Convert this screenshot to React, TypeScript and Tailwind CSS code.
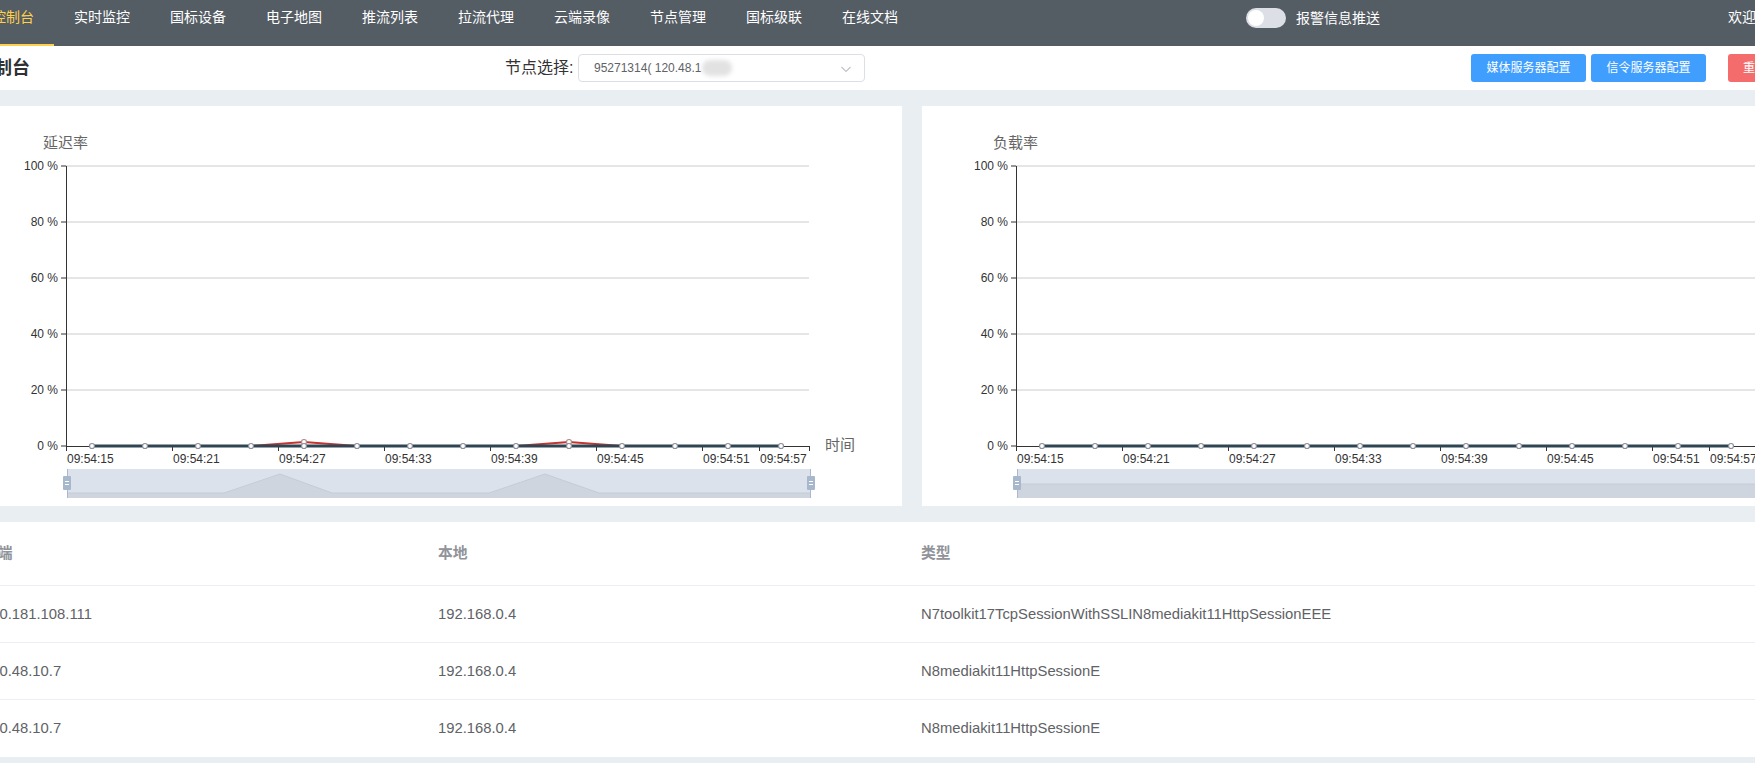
import React from 'react';

const NAV = ['控制台', '实时监控', '国标设备', '电子地图', '推流列表', '拉流代理', '云端录像', '节点管理', '国标级联', '在线文档'];

const XS = Array.from({ length: 14 }, (_, i) => 120 + 53 * i);
const TICKS = [94, 200, 306, 412, 518, 624, 730, 787];
const LABELS = ['09:54:15', '09:54:21', '09:54:27', '09:54:33', '09:54:39', '09:54:45', '09:54:51', '09:54:57'];

const ROWS = [
  { remote: '120.181.108.111', local: '192.168.0.4', type: 'N7toolkit17TcpSessionWithSSLIN8mediakit11HttpSessionEEE' },
  { remote: '120.48.10.7', local: '192.168.0.4', type: 'N8mediakit11HttpSessionE' },
  { remote: '120.48.10.7', local: '192.168.0.4', type: 'N8mediakit11HttpSessionE' },
];

type ChartProps = {
  title: string;
  peaks: number[];
  shadow: string;
};

function Chart({ title, peaks, shadow }: ChartProps) {
  const red = XS.map((x, i) => `${x},${peaks.includes(i) ? 336 : 340}`).join(' ');
  const dark = XS.map((x) => `${x},340`).join(' ');
  const shadowArea = `${shadow} 839,392 95,392`;
  return (
    <svg width="930" height="400" style={{ fontFamily: "'Liberation Sans', 'Noto Sans CJK SC', sans-serif" }}>
      <text x="71" y="36" fontSize="15" fill="#666" dominantBaseline="central">{title}</text>
      {/* y axis */}
      {[0, 20, 40, 60, 80, 100].map((v) => {
        const y = 340 - v * 2.8;
        return (
          <g key={v}>
            {v > 0 && <line x1="94" x2="837" y1={y} y2={y} stroke="#ccc" strokeWidth="1" />}
            <line x1="89" x2="94" y1={y} y2={y} stroke="#333" strokeWidth="1" />
            <text x="86" y={y} fontSize="12" fill="#333" textAnchor="end" dominantBaseline="central">{`${v} %`}</text>
          </g>
        );
      })}
      <line x1="94.5" x2="94.5" y1="60" y2="340" stroke="#333" strokeWidth="1" />
      <line x1="94" x2="837" y1="340.5" y2="340.5" stroke="#333" strokeWidth="1" />
      {TICKS.concat([837]).map((t) => (
        <line key={t} x1={t + 0.5} x2={t + 0.5} y1="340" y2="345" stroke="#333" strokeWidth="1" />
      ))}
      {TICKS.map((t, i) => (
        <text key={t} x={t + 1} y="353" fontSize="12" fill="#333" dominantBaseline="central">{LABELS[i]}</text>
      ))}
      <text x="853" y="338" fontSize="15" fill="#666" dominantBaseline="central">时间</text>
      {/* series */}
      <polyline points={red} fill="none" stroke="#c23531" strokeWidth="2" />
      <polyline points={dark} fill="none" stroke="#2f4554" strokeWidth="3" />
      {peaks.map((i) => (
        <circle key={'r' + i} cx={XS[i]} cy="336" r="2.5" fill="#fff" stroke="#b08a8c" strokeWidth="1.2" />
      ))}
      {XS.map((x) => (
        <circle key={x} cx={x} cy="340" r="2.5" fill="#fff" stroke="#8a8f99" strokeWidth="1.2" />
      ))}
      {/* data zoom slider */}
      <rect x="95" y="363" width="744" height="29" fill="#dce2eb" />
      <polygon points={shadowArea} fill="#ced5df" />
      <polyline points={shadow} fill="none" stroke="#c4ccd7" strokeWidth="1" />
      <line x1="95.5" x2="95.5" y1="363" y2="392" stroke="#acb8d1" strokeWidth="1" />
      <line x1="838.5" x2="838.5" y1="363" y2="392" stroke="#acb8d1" strokeWidth="1" />
      {[91, 835].map((hx) => (
        <g key={hx}>
          <rect x={hx} y="370" width="8" height="14" rx="1" fill="#a7b7cc" />
          <line x1={hx + 2} x2={hx + 6} y1="375.5" y2="375.5" stroke="#fff" strokeWidth="1" />
          <line x1={hx + 2} x2={hx + 6} y1="378.5" y2="378.5" stroke="#fff" strokeWidth="1" />
        </g>
      ))}
    </svg>
  );
}

export default function App() {
  return (
    <div className="h-[763px] w-[1755px] overflow-hidden bg-[#e9eef3] font-['Liberation_Sans','Noto_Sans_CJK_SC',sans-serif]">
      <div className="-ml-[28px] w-[1880px]">
        {/* top menu */}
        <div className="flex h-[46px] bg-[#545c64] text-[14px] text-white">
          {NAV.map((n, i) => (
            <div
              key={n}
              className={
                i === 0
                  ? 'h-[46px] border-b-2 border-[#ffd04b] px-[20px] pt-[7px] leading-[20px] text-[#ffd04b]'
                  : 'h-[46px] border-b-2 border-transparent px-[20px] pt-[7px] leading-[20px]'
              }
            >
              {n}
            </div>
          ))}
          <div className="ml-[328px] flex h-[36px] items-center gap-[10px] self-start">
            <div className="relative h-[20px] w-[40px] rounded-full bg-[#dcdfe6]">
              <div className="absolute left-[2px] top-[2px] h-[16px] w-[16px] rounded-full bg-white" />
            </div>
            <span className="w-[84px] whitespace-nowrap">报警信息推送</span>
          </div>
          <div className="ml-[348px] flex h-[34px] items-center self-start whitespace-nowrap">欢迎，admin</div>
        </div>

        {/* sub header */}
        <div className="flex h-[44px] items-center bg-white">
          <div className="w-[56px] whitespace-nowrap pl-[4px] text-[18px] font-semibold text-[#303133]">控制台</div>
          <div className="ml-[477px] w-[73px] whitespace-nowrap text-[16px] text-[#333]">节点选择:</div>
          <div className="relative flex h-[28px] w-[287px] items-center rounded border border-[#dcdfe6] pl-[15px] text-[12px] text-[#606266]">
            <span className="whitespace-nowrap">95271314( 120.48.1</span>
            <span className="ml-[1px] inline-block h-[16px] w-[30px] rounded-full bg-[#e2e2e2] blur-[2px]" />
            <svg className="absolute right-[12px] top-[8px]" width="12" height="12" viewBox="0 0 12 12">
              <polyline points="1.5,4 6,8.5 10.5,4" fill="none" stroke="#c0c4cc" strokeWidth="1.2" />
            </svg>
          </div>
          <button className="ml-[606px] flex h-[28px] w-[115px] items-center justify-center rounded-[3px] bg-[#409eff] text-[12px] text-white">
            媒体服务器配置
          </button>
          <button className="ml-[5px] flex h-[28px] w-[115px] items-center justify-center rounded-[3px] bg-[#409eff] text-[12px] text-white">
            信令服务器配置
          </button>
          <button className="ml-[22px] flex h-[28px] items-center whitespace-nowrap rounded-[3px] bg-[#f56c6c] px-[15px] text-[12px] text-white">
            重启服务
          </button>
        </div>

        {/* charts */}
        <div className="flex gap-[20px] py-[16px]">
          <div className="h-[400px] w-[930px] bg-white">
            <Chart title="延迟率" peaks={[4, 9]} shadow="95,387 252,387 308,368 360,387 517,387 573,368 627,387 839,387" />
          </div>
          <div className="h-[400px] w-[930px] bg-white">
            <Chart title="负载率" peaks={[]} shadow="95,378 839,378" />
          </div>
        </div>

        {/* connections table */}
        <div className="bg-white text-[14.8px]">
          <div className="grid h-[64px] grid-cols-[455px_483px_1fr] items-center border-b border-[#ebeef5] font-semibold text-[#909399]">
            <div className="pl-[11px]">远端</div>
            <div className="pl-[11px]">本地</div>
            <div className="pl-[11px]">类型</div>
          </div>
          {ROWS.map((r, i) => (
            <div
              key={i}
              className={
                i < ROWS.length - 1
                  ? 'grid h-[57px] grid-cols-[455px_483px_1fr] items-center border-b border-[#ebeef5] text-[#606266]'
                  : 'grid h-[57px] grid-cols-[455px_483px_1fr] items-center text-[#606266]'
              }
            >
              <div className="pl-[11px]">{r.remote}</div>
              <div className="pl-[11px]">{r.local}</div>
              <div className="pl-[11px]">{r.type}</div>
            </div>
          ))}
        </div>
      </div>
    </div>
  );
}
